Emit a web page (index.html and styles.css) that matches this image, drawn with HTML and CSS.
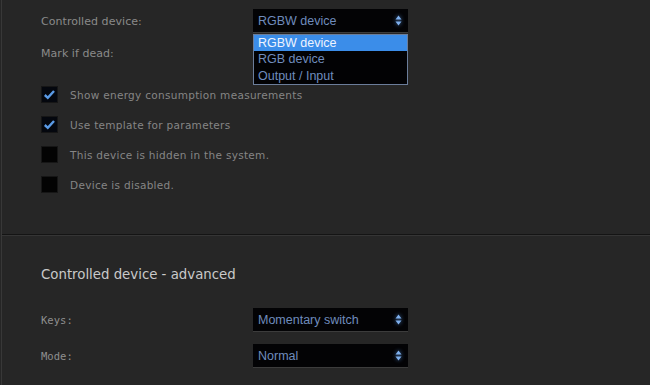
FILE: index.html
```html
<!DOCTYPE html>
<html lang="en">
<head>
    <meta charset="UTF-8">
    <title>Device settings</title>
    <link rel="stylesheet" href="styles.css">
</head>
<body>
    <div class="page">
        <div class="section basic">
            <div class="form-row">
                <span class="label">Controlled device:</span>
                <div class="select">
                    <span>RGBW device</span>
                    <svg class="arrows" width="7" height="11" viewBox="0 0 7 11"><path d="M3.5 0.5 L6.5 4.5 L0.5 4.5 Z M3.5 10.5 L6.5 6.5 L0.5 6.5 Z" fill="#7fb0ee"/></svg>
                </div>
                <ul class="dropdown">
                    <li class="active">RGBW device</li>
                    <li>RGB device</li>
                    <li>Output / Input</li>
                </ul>
            </div>
            <div class="form-row">
                <span class="label">Mark if dead:</span>
            </div>

            <div class="checks">
                <div class="check-row">
                    <span class="box checked"><svg width="13" height="11" viewBox="0 0 13 11"><path d="M1.8 6 L4.8 8.8 L11 2" stroke="#5a9be6" stroke-width="2.4" fill="none"/></svg></span>
                    <span class="check-label">Show energy consumption measurements</span>
                </div>
                <div class="check-row">
                    <span class="box checked"><svg width="13" height="11" viewBox="0 0 13 11"><path d="M1.8 6 L4.8 8.8 L11 2" stroke="#5a9be6" stroke-width="2.4" fill="none"/></svg></span>
                    <span class="check-label">Use template for parameters</span>
                </div>
                <div class="check-row">
                    <span class="box"></span>
                    <span class="check-label">This device is hidden in the system.</span>
                </div>
                <div class="check-row">
                    <span class="box"></span>
                    <span class="check-label">Device is disabled.</span>
                </div>
            </div>
        </div>

        <div class="section advanced">
            <h3>Controlled device - advanced</h3>
            <div class="form-row">
                <span class="label">Keys:</span>
                <div class="select">
                    <span>Momentary switch</span>
                    <svg class="arrows" width="7" height="11" viewBox="0 0 7 11"><path d="M3.5 0.5 L6.5 4.5 L0.5 4.5 Z M3.5 10.5 L6.5 6.5 L0.5 6.5 Z" fill="#7fb0ee"/></svg>
                </div>
            </div>
            <div class="form-row">
                <span class="label">Mode:</span>
                <div class="select">
                    <span>Normal</span>
                    <svg class="arrows" width="7" height="11" viewBox="0 0 7 11"><path d="M3.5 0.5 L6.5 4.5 L0.5 4.5 Z M3.5 10.5 L6.5 6.5 L0.5 6.5 Z" fill="#7fb0ee"/></svg>
                </div>
            </div>
        </div>
    </div>
</body>
</html>
```

FILE: styles.css
```css
html, body {
    margin: 0;
    padding: 0;
    background-color: #262626;
    height: 100%;
    overflow: hidden;
}

body {
    padding-left: 1px;
    font-family: "DejaVu Sans", Verdana, sans-serif;
}

.page {
    border-left: 1px solid #383838;
    min-height: 100%;
}

.section {
    padding-left: 39px;
}

.basic {
    padding-top: 9px;
    padding-bottom: 41px;
    border-bottom: 1px solid #141414;
    box-shadow: 0 1px 0 #353535;
}

.form-row {
    position: relative;
    display: flex;
    align-items: center;
    height: 24px;
    margin-bottom: 8px;
}

.label {
    width: 212px;
    font-size: 11px;
    color: #8a8a8a;
    letter-spacing: 0.05px;
}

.select {
    width: 155px;
    height: 24px;
    box-sizing: border-box;
    background-color: #030305;
    border-bottom: 1px solid #3c3c3c;
    display: flex;
    align-items: center;
    justify-content: space-between;
    padding: 0 6px 0 5px;
    font-family: "Liberation Sans", Arial, sans-serif;
    font-size: 12.5px;
    color: #6f8cbd;
}

.arrows {
    filter: drop-shadow(0 0 2px rgba(90, 150, 230, 0.8));
}

.dropdown {
    position: absolute;
    left: 212px;
    top: 25px;
    width: 155px;
    box-sizing: border-box;
    margin: 0;
    padding: 0;
    list-style: none;
    background-color: #020204;
    border: 1px solid #6b7d9a;
    font-family: "Liberation Sans", Arial, sans-serif;
    font-size: 12.5px;
    color: #6f8cbd;
    z-index: 2;
}

.dropdown li {
    height: 16.3px;
    line-height: 16px;
    padding-left: 4px;
}

.dropdown li.active {
    background-color: #3b8de9;
    color: #eef4ff;
}

.checks {
    padding-top: 13px;
}

.check-row {
    display: flex;
    align-items: center;
    height: 17px;
    margin-bottom: 13px;
}

.check-row:last-child {
    margin-bottom: 0;
}

.box {
    width: 17px;
    height: 17px;
    box-sizing: border-box;
    background-color: #030303;
    border: 1px solid #161616;
    display: flex;
    align-items: center;
    justify-content: center;
    margin-right: 12px;
}

.box.checked {
    background-color: #04070e;
}

.check-label {
    font-size: 10.5px;
    color: #858585;
    letter-spacing: 0.3px;
}

.advanced {
    padding-top: 30px;
}

.advanced h3 {
    margin: 0 0 25px 0;
    font-family: "DejaVu Sans Condensed", Tahoma, sans-serif;
    font-weight: normal;
    font-size: 14.8px;
    line-height: 18px;
    color: #c9c9c9;
}

.advanced .form-row {
    margin-bottom: 12px;
}

.advanced .label {
    font-family: "DejaVu Sans Mono", monospace;
    font-size: 10.5px;
    color: #8f8f8f;
}
```
